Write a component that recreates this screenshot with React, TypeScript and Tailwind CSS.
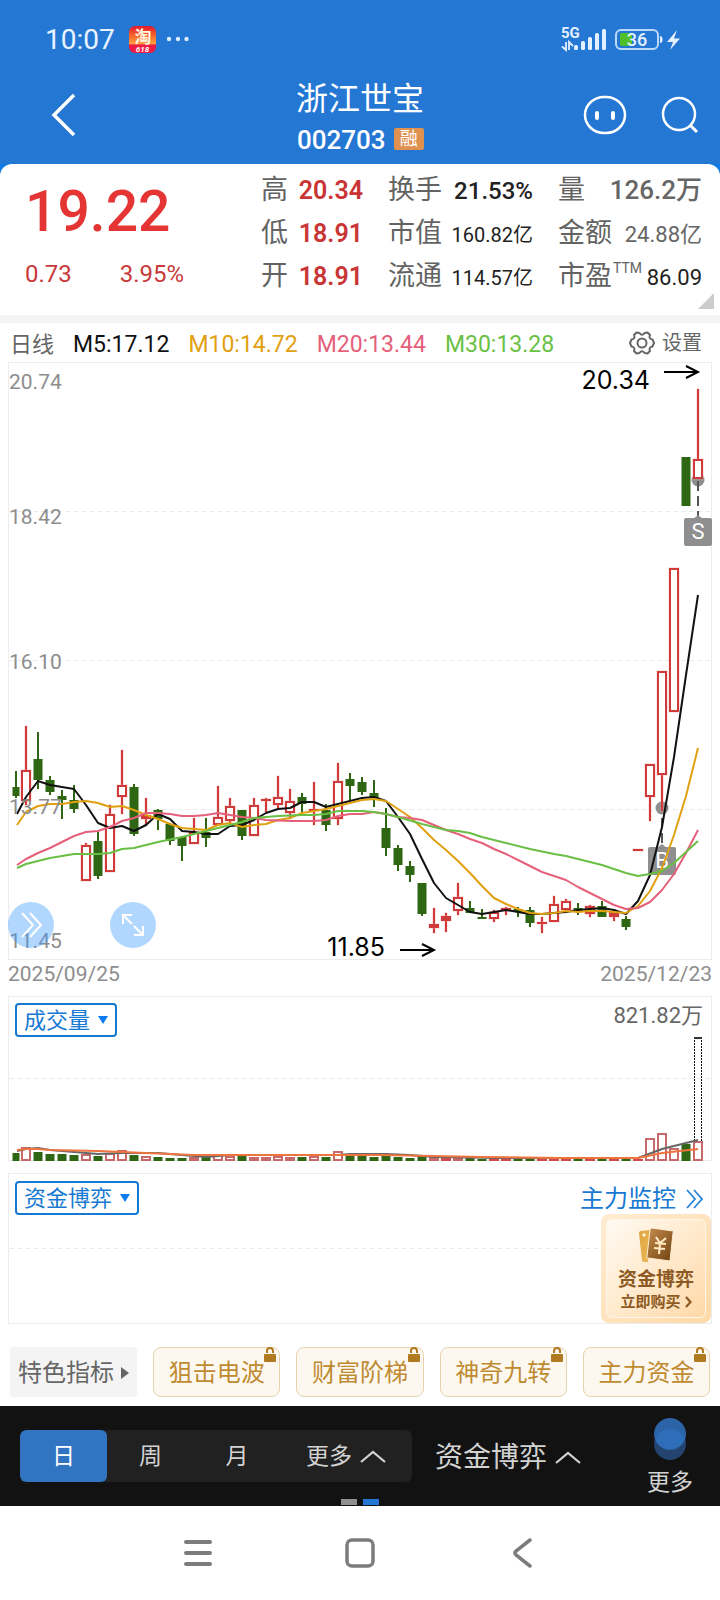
import React from "react";

type Candle = { up: boolean; high: number; top: number; bottom: number; low: number };

const c = (up: number, high: number, top: number, bottom: number, low: number): Candle => ({
  up: up === 1, high, top, bottom, low,
});

const candles: Candle[] = [
  c(0, 771, 787, 796, 798), c(1, 726, 770, 801, 805), c(0, 732, 759, 780, 789), c(0, 776, 780, 792, 795),
  c(0, 790, 796, 800, 819), c(0, 785, 800, 809, 813), c(1, 843, 845, 881, 881), c(0, 832, 841, 876, 879),
  c(1, 805, 814, 872, 872), c(1, 750, 785, 797, 814), c(0, 784, 787, 834, 836), c(1, 798, 815, 819, 826),
  c(0, 809, 810, 819, 830), c(0, 823, 824, 841, 845), c(0, 836, 837, 846, 861), c(1, 818, 832, 844, 844),
  c(0, 818, 832, 838, 847), c(1, 786, 817, 825, 825), c(1, 798, 806, 821, 823), c(0, 810, 810, 836, 840),
  c(1, 798, 805, 836, 836), c(1, 798, 799, 801, 812), c(1, 776, 797, 805, 808), c(1, 789, 801, 813, 819),
  c(0, 793, 797, 804, 812), c(1, 782, 809, 811, 825), c(0, 804, 810, 825, 831), c(1, 763, 781, 819, 825),
  c(0, 773, 779, 786, 800), c(0, 777, 782, 792, 795), c(0, 780, 793, 798, 807), c(0, 808, 828, 848, 856),
  c(0, 845, 848, 865, 871), c(0, 861, 866, 875, 882), c(0, 883, 883, 914, 916), c(1, 908, 924, 928, 933),
  c(1, 913, 916, 921, 932), c(1, 883, 897, 911, 915), c(0, 901, 908, 913, 913), c(0, 909, 917, 919, 919),
  c(1, 910, 912, 919, 922), c(1, 907, 908, 911, 915), c(0, 907, 909, 912, 917), c(0, 907, 910, 923, 927),
  c(1, 917, 922, 924, 933), c(1, 896, 904, 922, 922), c(1, 899, 901, 910, 913), c(0, 903, 908, 911, 915),
  c(1, 905, 906, 914, 917), c(0, 901, 906, 917, 917), c(1, 910, 912, 917, 921), c(0, 916, 919, 927, 930),
  c(1, 849, 849, 851, 851), c(1, 764, 764, 797, 821), c(1, 671, 671, 775, 811), c(1, 568, 568, 712, 712),
  c(0, 457, 457, 506, 506), c(1, 389, 459, 479, 479),
];

const volumeTops = [
  1153, 1147, 1152, 1154, 1154, 1155, 1154, 1156, 1153, 1150, 1155, 1156, 1157, 1158, 1158, 1157, 1157, 1154, 1156,
  1156, 1157, 1157, 1156, 1157, 1157, 1156, 1157, 1151, 1156, 1156, 1157, 1156, 1157, 1158, 1156, 1157, 1158, 1157,
  1158, 1159, 1158, 1158, 1158, 1158, 1159, 1158, 1158, 1159, 1159, 1159, 1159, 1159, 1159, 1138, 1133, 1148, 1144,
  1141,
];

const ma5 =
  "17,814 26,797 38,781 50,785 62,787 74,789 86,805 98,823 110,828 122,826 134,831 146,825 158,814 170,819 182,831 194,832 206,834 218,834 230,826 242,825 254,820 266,813 278,809 290,808 302,802 314,802 326,807 338,804 350,801 362,798 374,797 386,801 398,817 410,834 422,859 434,883 446,898 458,905 470,912 482,914 494,912 506,910 518,912 530,914 542,914 554,913 566,912 578,910 590,909 602,908 614,910 626,914 638,901 650,875 662,827 674,757 686,675 698,595";
const ma10 =
  "17,825 26,812 38,806 50,804 62,804 74,802 86,801 98,803 110,807 122,806 134,810 146,815 158,819 170,824 182,828 194,829 206,830 218,825 230,823 242,827 254,825 266,824 278,820 290,818 302,813 314,811 326,809 338,806 350,803 362,800 374,799 386,801 398,809 410,817 422,828 434,840 446,850 458,861 470,873 482,886 494,898 506,904 518,909 530,913 542,914 554,913 566,911 578,912 590,911 602,911 614,912 626,913 638,906 650,891 662,868 674,835 686,796 698,748";
const ma20 =
  "17,865 26,859 38,853 50,848 62,842 74,836 86,832 98,831 110,827 122,821 134,818 146,813 158,813 170,814 182,816 194,816 206,815 218,813 230,815 242,817 254,818 266,820 290,821 314,821 326,820 338,816 350,814 362,814 374,812 386,814 398,817 410,818 422,820 434,825 446,830 458,834 470,839 482,843 494,849 506,854 518,860 530,866 542,872 554,876 566,880 578,887 590,893 602,899 614,905 626,909 638,908 650,902 662,890 674,874 686,853 698,830";
const ma30 =
  "17,868 26,864 38,861 50,858 62,856 74,854 86,854 98,854 110,853 122,849 134,848 158,842 182,837 206,831 230,825 242,822 254,818 278,816 302,815 314,815 326,814 338,811 362,811 374,812 386,814 398,817 422,824 446,830 458,831 470,833 482,837 506,843 530,849 554,854 566,856 602,865 626,873 638,876 650,874 662,871 674,863 686,852 698,841";

const RED = "#cf3a3a";
const GREEN = "#2f6613";

function slot(i: number) {
  const x = i === 0 ? 16 : 14 + i * 12;
  const half = i === 0 ? 4 : 5;
  return { x, half };
}

function Sticks() {
  return (
    <g>
      {candles.map((k, i) => {
        const { x, half } = slot(i);
        const color = k.up ? RED : GREEN;
        const solid = !k.up || k.bottom - k.top < 6;
        const halo = k.up ? { stroke: "#f3a0a0", strokeOpacity: 0.5, paintOrder: "stroke" } : {};
        return (
          <g key={i} fill={color}>
            {k.top > k.high && <rect x={x - 1} y={k.high} width={2} height={k.top - k.high} {...halo} />}
            {k.low > k.bottom && <rect x={x - 1} y={k.bottom} width={2} height={k.low - k.bottom} {...halo} />}
            {solid ? (
              <rect x={x - half + (k.up ? 0 : 0.5)} y={k.top} width={half * 2 - (k.up ? 0 : 1)} height={k.bottom - k.top} {...halo} />
            ) : (
              <>
                <rect x={x - half} y={k.top} width={half * 2} height={k.bottom - k.top} {...halo} />
                <rect x={x - half + 1} y={k.top + 1} width={half * 2 - 2} height={k.bottom - k.top - 2} fill="#fff" stroke={color} strokeWidth={2} />
              </>
            )}
          </g>
        );
      })}
    </g>
  );
}

function Signal({ x, y, label }: { x: number; y: number; label: string }) {
  return (
    <g>
      <path d={`M${x - 5} ${y} L${x} ${y - 4} L${x + 5} ${y} Z`} fill="#8f8f8f" />
      <rect x={x - 14} y={y - 1} width={28} height={28} rx={2} fill="#8f8f8f" />
      <text x={x} y={y + 20} textAnchor="middle" fontSize={22} fill="#fff">{label}</text>
    </g>
  );
}

function PriceChart() {
  const labels: [string, number][] = [["20.74", 389], ["18.42", 524], ["16.10", 669], ["13.77", 814], ["11.45", 948]];
  return (
    <svg viewBox="8 362 704 598" className="block h-auto w-full" role="img" aria-label="日线">
      <rect x={8.5} y={362.5} width={703} height={597} fill="none" stroke="#ececec" />
      <g stroke="#ececec" strokeDasharray="5 3">
        <path d="M9 511.5H711M9 660.5H711M9 809.5H711" />
      </g>
      <circle cx={662} cy={808} r={6.5} fill="#8f8f8f" />
      <circle cx={698} cy={480} r={6.5} fill="#8f8f8f" />
      <Sticks />
      <path d="M662 818V846M698 481V517" stroke="#555" strokeWidth={2} strokeDasharray="10 5" />
      <Signal x={662} y={848} label="B" />
      <Signal x={698} y={519} label="S" />
      <g fill="none" strokeWidth={2} strokeLinejoin="round">
        <polyline points={ma5} stroke="#111" />
        <polyline points={ma10} stroke="#e0a010" />
        <polyline points={ma20} stroke="#e5607a" />
        <polyline points={ma30} stroke="#6abf45" />
      </g>
      <g fontSize={21} fill="#8d8d8d">
        {labels.map(([t, y]) => (
          <text key={t} x={9} y={y}>{t}</text>
        ))}
      </g>
      <g fontSize={25} fill="#000" fontFamily="Inter, sans-serif">
        <text x={650} y={389} textAnchor="end">20.34</text>
        <text x={385} y={956} textAnchor="end">11.85</text>
      </g>
      <path d="M664 372H697M686 366L698 372L686 378M400 950H433M422 944L434 950L422 956" fill="none" stroke="#000" strokeWidth={2} />
    </svg>
  );
}

function VolumeChart() {
  return (
    <svg viewBox="8 996 704 165" className="block h-auto w-full" role="img" aria-label="成交量">
      <rect x={8.5} y={996.5} width={703} height={164} fill="none" stroke="#ececec" />
      <path d="M9 1078.5H711" stroke="#ececec" strokeDasharray="5 3" />
      {volumeTops.map((y, i) => {
        const { x, half } = slot(i);
        const h = 1161 - y;
        if (!candles[i].up) return <rect key={i} x={x - half + 0.5} y={y} width={half * 2 - 1} height={h} fill={GREEN} />;
        if (h < 4) return <rect key={i} x={x - half} y={y} width={half * 2} height={h} fill="#cf4a4a" />;
        return <rect key={i} x={x - half + 1} y={y + 1} width={half * 2 - 2} height={h - 2} fill="#fff" stroke="#c96a6a" strokeWidth={2} />;
      })}
      <path d="M694.5 1141V1037M701.5 1037V1141" stroke="#111" strokeDasharray="2 1" fill="none" />
      <path d="M694 1038H702" stroke="#333" strokeWidth={2} />
      <g fill="none" strokeWidth={2}>
        <polyline stroke="#666" points="17,1151 26,1149 38,1148 50,1150 74,1152 98,1154 122,1153 158,1153 182,1155 206,1157 230,1155 338,1155 350,1154 386,1154 410,1155 434,1157 500,1158 638,1158 662,1149 698,1140" />
        <polyline stroke="#ee7440" points="17,1150 26,1149 38,1149 50,1150 98,1151 170,1154 194,1155 380,1155 434,1156 482,1157 560,1158 638,1158 662,1153 698,1149" />
      </g>
    </svg>
  );
}

function PanelPicker({ children }: { children: React.ReactNode }) {
  return (
    <button className="flex h-[34px] items-center gap-2 rounded border-2 border-[#1779d2] bg-white px-[7px] text-[22px] text-[#1779d2]">
      <span className="pt-px">{children}</span>
      <svg width="10" height="8" viewBox="0 0 10 8"><path d="M0 0H10L5 8Z" fill="#0b7cf0" /></svg>
    </button>
  );
}

function Stat({ label, value, className, sup }: { label: string; value: string; className: string; sup?: string }) {
  return (
    <div className="flex h-[43px] items-center justify-between">
      <dt className="flex text-[27px] text-[#636363]">
        {label}
        {sup && <sup className="top-0 mt-[5px] pl-px text-[14px] leading-none">{sup}</sup>}
      </dt>
      <dd className={className}>{value}</dd>
    </div>
  );
}

function Header() {
  return (
    <header className="bg-[#2577d4] text-white">
      <div className="flex h-[78px] items-center pl-[45px] pr-10">
        <span className="pt-px text-[28px] text-[#e8f3ff]">10:07</span>
        <svg className="ml-[14px]" width="27" height="27" viewBox="0 0 27 27">
          <defs>
            <linearGradient id="app" x2="0" y2="1">
              <stop offset="0" stopColor="#e3172f" />
              <stop offset=".35" stopColor="#f5652a" />
              <stop offset=".66" stopColor="#ffa040" />
              <stop offset=".7" stopColor="#ec1c43" />
            </linearGradient>
          </defs>
          <rect width="27" height="27" rx="6" fill="url(#app)" />
          <text x="14" y="17" fontSize="17" fontWeight="700" textAnchor="middle" fill="#fff6e0">淘</text>
          <text x="13.500" y="26" fontSize="8" fontWeight="700" fontStyle="italic" textAnchor="middle" fill="#fff">618</text>
        </svg>
        <svg className="ml-[10px]" width="24" height="6" viewBox="0 0 24 6" fill="#dcecff">
          <circle cx="3" cy="3" r="2.200" /><circle cx="12" cy="3" r="2.200" /><circle cx="20.500" cy="3" r="2.200" />
        </svg>
        <svg className="ml-auto" width="124" height="40" viewBox="556 18 124 40" fill="#e3f0ff">
          <text x="561" y="37" fontSize="15" fontWeight="700">5G</text>
          <path d="M566 41V49L562 45.500M569 49V41L573 45" fill="none" stroke="#e3f0ff" strokeWidth="1.800" />
          <rect x="574" y="44" width="4" height="5" rx="1.500" /><rect x="581" y="40" width="4" height="9" rx="1.500" />
          <rect x="588" y="36" width="4" height="13" rx="1.500" /><rect x="595" y="32" width="4" height="17" rx="1.500" />
          <rect x="602" y="28" width="4" height="21" rx="1.500" />
          <rect x="616" y="29" width="42" height="19" rx="5" fill="none" stroke="#bcd9fa" strokeWidth="2" />
          <path d="M622 32H632V45H622Q620 45 620 43V34Q620 32 622 32Z" fill="#4fc02a" />
          <path d="M660 35Q662.500 35 662.500 38.500T660 42Z" />
          <text x="637" y="45" fontSize="18" fontWeight="500" textAnchor="middle">36</text>
          <path d="M677 29L667 41H673L670 49L680 37.500H674Z" />
        </svg>
      </div>
      <div className="grid h-[86px] grid-cols-[1fr_auto_1fr] items-center">
        <button aria-label="返回" className="mb-3 ml-[50px] justify-self-start">
          <svg width="26" height="44" viewBox="0 0 26 44"><path d="M24 2L4 22L24 42" fill="none" stroke="#fff" strokeWidth="3.500" /></svg>
        </button>
        <div className="pb-1">
          <h1 className="text-[32px] leading-[40px] font-normal">浙江世宝</h1>
          <div className="flex items-center gap-2 pl-px">
            <span className="pt-px text-[26px] leading-[40px] font-medium">002703</span>
            <span className="rounded-[2px] bg-[#e0904f] px-[6px] text-[18px] leading-[22px]">融</span>
          </div>
        </div>
        <div className="mb-3 flex items-center gap-[34px] justify-self-end pr-[21px]">
          <button aria-label="助手">
            <svg width="44" height="40" viewBox="0 0 44 40" fill="none" stroke="#fff" strokeWidth="2.500">
              <rect x="2" y="2" width="40" height="36" rx="19" ry="18" />
              <path d="M14 18V23M30 18V23" strokeWidth="4" strokeLinecap="round" />
            </svg>
          </button>
          <button aria-label="搜索">
            <svg width="38" height="38" viewBox="0 0 38 38" fill="none" stroke="#fff" strokeWidth="2.500">
              <circle cx="18" cy="18" r="16" /><path d="M29 29L36 36" strokeWidth="3" />
            </svg>
          </button>
        </div>
      </div>
    </header>
  );
}

function Quote() {
  return (
    <section className="bg-[#0f7ce6]">
      <div className="relative flex h-[151px] rounded-t-xl bg-white">
        <div className="w-[261px] shrink-0 pl-[25px]">
          <p className="pt-3 text-[57px] leading-[72px] font-medium text-[#e53434]">19.22</p>
          <p className="flex gap-12 pt-[9px] text-[24px] leading-[34px] text-[#c83a3a]">
            <span>0.73</span><span>3.95%</span>
          </p>
        </div>
        <dl className="mr-[18px] grid flex-1 grid-cols-[102fr_145fr_144fr] content-start gap-x-[25px] pt-[5px]">
          <Stat label="高" value="20.34" className="text-[25px] font-semibold text-[#c93535]" />
          <Stat label="换手" value="21.53%" className="text-[24px] font-medium text-[#222]" />
          <Stat label="量" value="126.2万" className="text-[26px] font-medium text-[#666]" />
          <Stat label="低" value="18.91" className="text-[25px] font-semibold text-[#c93535]" />
          <Stat label="市值" value="160.82亿" className="pt-[2px] text-[20px] text-[#222]" />
          <Stat label="金额" value="24.88亿" className="pt-[2px] text-[22px] text-[#666]" />
          <Stat label="开" value="18.91" className="text-[25px] font-semibold text-[#c93535]" />
          <Stat label="流通" value="114.57亿" className="pt-[2px] text-[20px] text-[#222]" />
          <Stat label="市盈" sup="TTM" value="86.09" className="pt-[2px] text-[22px] text-[#222]" />
        </dl>
        <svg className="absolute right-[6px] bottom-[6px]" width="16" height="16" viewBox="0 0 16 16"><path d="M16 0V16H0Z" fill="#ccc" /></svg>
      </div>
      <div className="h-2 bg-[#f3f3f3]" />
    </section>
  );
}

function Legend() {
  return (
    <div className="flex h-[39px] items-center gap-[19px] pt-[5px] pr-[18px] pl-[10px] text-[23px]">
      <span className="pb-px text-[22px] text-[#666]">日线</span>
      <span className="text-[#111]">M5:17.12</span>
      <span className="text-[#e0a010]">M10:14.72</span>
      <span className="text-[#e5607a]">M20:13.44</span>
      <span className="text-[#6abf45]">M30:13.28</span>
      <button className="ml-auto flex items-center gap-[7px] pb-[4px] text-[20px] text-[#666]">
        <svg width="26" height="24" viewBox="0 0 26 24" fill="none" stroke="#666" strokeWidth="2" strokeLinejoin="round">
          <path d="M7.500 1.500L10.500 2Q13 5.500 15.500 2L18.500 1.500L21 4Q19.500 8 23.500 8.500L25 12L23.500 15.500Q19.500 16 21 20L18.500 22.500L15.500 22Q13 18.500 10.500 22L7.500 22.500L5 20Q6.500 16 2.500 15.500L1 12L2.500 8.500Q6.500 8 5 4Z" />
          <circle cx="13" cy="12" r="4.500" />
        </svg>
        设置
      </button>
    </div>
  );
}

function PromoCard() {
  return (
    <button className="absolute right-0 bottom-0 h-[109px] w-[110px] rounded-lg bg-linear-to-br from-[#ffedd2] to-[#ffd9a8] p-[5px] font-bold text-[#8c5a22]">
      <span className="flex h-full flex-col items-center rounded-md border border-[#fff6e8] bg-linear-to-br from-[#fffaf2] to-[#ffd9a8] pt-2">
        <svg width="36" height="36" viewBox="0 0 36 36">
          <defs>
            <linearGradient id="gold" x2="1" y2="1"><stop stopColor="#e0a33a" /><stop offset="1" stopColor="#eab95c" /></linearGradient>
            <linearGradient id="brown" x2="1" y2="1"><stop stopColor="#c68f4e" /><stop offset="1" stopColor="#6f400f" /></linearGradient>
          </defs>
          <path d="M1 5Q1 3 3 3L12 2L10 34L6 34Q4 34 4 32Z" fill="url(#gold)" />
          <circle cx="6" cy="7" r="1.700" fill="#fff3d8" />
          <path d="M14 0L35 3Q36 3 35 5L32 33L10 30Q8 30 9 28L12 2Q12 0 14 0Z" fill="url(#brown)" stroke="#ffefd6" />
          <path d="M18 9L22 15L28 10M17 15L28 16M16 20L27 21M22 15L21 26" fill="none" stroke="#ffe9c2" strokeWidth="2.200" />
        </svg>
        <span className="pt-[3px] text-[19px] leading-[25px]">资金博弈</span>
        <span className="flex items-center gap-1 text-[15px] leading-[20px]">
          立即购买
          <svg width="7" height="12" viewBox="0 0 7 12"><path d="M1 1L5.500 6L1 11" fill="none" stroke="#8c5a22" strokeWidth="2.200" /></svg>
        </span>
      </span>
    </button>
  );
}

function Up() {
  return (
    <svg width="26" height="14" viewBox="0 0 26 14"><path d="M1 12L13 2L25 12" fill="none" stroke="#d2d2d2" strokeWidth="2.200" /></svg>
  );
}

export default function App() {
  return (
    <div className="min-h-screen bg-white font-[Roboto,'Noto_Sans_CJK_SC',sans-serif] whitespace-nowrap">
      <Header />
      <main>
        <Quote />
        <Legend />
        <section className="relative mx-2">
          <PriceChart />
          <button aria-label="展开" className="absolute bottom-3 left-0 flex size-[46px] items-center justify-center rounded-full bg-[#3b9bff]/40">
            <svg width="24" height="28" viewBox="0 0 24 28" fill="none" stroke="#fff" strokeWidth="2"><path d="M3 2L14 14L3 26M11 2L22 14L11 26" /></svg>
          </button>
          <button aria-label="全屏" className="absolute bottom-3 left-[102px] flex size-[46px] items-center justify-center rounded-full bg-[#3b9bff]/40">
            <svg width="24" height="24" viewBox="0 0 24 24" fill="none" stroke="#fff" strokeWidth="2"><path d="M2 11V2H11M2 2L11 11M22 13V22H13M22 22L13 13" /></svg>
          </button>
        </section>
        <div className="flex h-9 justify-between px-2 pt-[2px] text-[21px] leading-[25px] text-[#8d8d8d]">
          <time>2025/09/25</time>
          <time>2025/12/23</time>
        </div>
        <section className="relative mx-2">
          <VolumeChart />
          <div className="absolute inset-x-0 top-[7px] flex justify-between pr-[9px] pl-[7px]">
            <PanelPicker>成交量</PanelPicker>
            <span className="text-[22px] leading-[26px] text-[#666]">821.82万</span>
          </div>
        </section>
        <section className="relative mx-2 mt-3 h-[151px] border border-[#ececec]">
          <svg className="absolute inset-x-0 top-[74px] w-full" height="1"><line x2="100%" y1=".5" y2=".5" stroke="#ececec" strokeDasharray="5 3" /></svg>
          <div className="flex items-center justify-between pt-[6px] pr-[7px] pl-[6px]">
            <PanelPicker>资金博弈</PanelPicker>
            <a href="#monitor" className="flex items-center gap-[10px] pt-[2px] text-[24px] leading-[34px] text-[#1779d2]">
              主力监控
              <svg width="18" height="20" viewBox="0 0 18 20" fill="none" stroke="#2b84dc" strokeWidth="1.800"><path d="M1 1L9 10L1 19M8 1L16 10L8 19" /></svg>
            </a>
          </div>
          <PromoCard />
        </section>
        <nav aria-label="特色指标" className="mt-[23px] grid h-[50px] grid-cols-5 gap-4 px-[10px] text-[24px]">
          <button className="flex items-center justify-center gap-[7px] rounded bg-[#f4f4f4] pt-px text-[#666]">
            特色指标
            <svg width="8" height="12" viewBox="0 0 8 12"><path d="M0 0L8 6L0 12Z" fill="#666" /></svg>
          </button>
          {["狙击电波", "财富阶梯", "神奇九转", "主力资金"].map((t) => (
            <button key={t} className="relative rounded-lg border border-[#e6d3ae] bg-[#fcf8f0] pt-px text-[#bf8b30]">
              {t}
              <svg className="absolute -top-px right-[3px]" width="12" height="15" viewBox="0 0 12 15">
                <path d="M3 6V4Q3 1 6 1T9 4V6" fill="none" stroke="#b07a20" strokeWidth="2" />
                <rect y="7" width="12" height="8" rx="1" fill="#b07a20" />
              </svg>
            </button>
          ))}
        </nav>
      </main>
      <footer className="mt-[9px]">
        <div className="relative flex h-[100px] items-center bg-[#121212] pl-5 text-[#d2d2d2]">
          <div className="flex h-[52px] w-[392px] overflow-hidden rounded-md bg-[#212121] text-[23px]">
            <button className="w-[87px] rounded-md bg-[#3174c2] pt-[2px] text-white">日</button>
            <button className="w-[87px] pt-[2px]">周</button>
            <button className="w-[86px] pt-[2px]">月</button>
            <button className="flex flex-1 items-center justify-center gap-2 pt-[2px]">更多<Up /></button>
          </div>
          <button className="ml-[23px] flex items-center gap-2 pt-[3px] text-[28px]">资金博弈<Up /></button>
          <button className="mr-[27px] ml-auto flex flex-col items-center self-stretch pt-3 text-[23px] leading-[34px]">
            <svg width="32" height="42" viewBox="0 0 32 42">
              <circle cx="16" cy="26" r="16" fill="#23446f" />
              <circle cx="16" cy="16" r="16" fill="#2c62a6" />
              <path d="M1 21A16 16 0 0 1 31 21A16 16 0 0 1 1 21Z" fill="#2e6db8" />
            </svg>
            <span className="pt-[6px]">更多</span>
          </button>
          <div className="absolute inset-x-0 bottom-px flex justify-center gap-[6px]">
            <span className="h-[6px] w-4 bg-[#8f8f8f]" />
            <span className="h-[6px] w-4 bg-[#2577d4]" />
          </div>
        </div>
        <nav aria-label="系统导航" className="flex h-[94px] items-center justify-center gap-[132px]">
          <button aria-label="最近任务">
            <svg width="30" height="30" viewBox="0 0 30 30" stroke="#7c7c7c" strokeWidth="4" strokeLinecap="round"><path d="M3 4H27M3 15H27M3 26H27" /></svg>
          </button>
          <button aria-label="主屏幕">
            <svg width="30" height="30" viewBox="0 0 30 30"><rect x="2" y="2" width="26" height="26" rx="5" fill="none" stroke="#7c7c7c" strokeWidth="3.500" /></svg>
          </button>
          <button aria-label="后退">
            <svg width="30" height="30" viewBox="0 0 30 30"><path d="M23 2L9 13Q7 15 9 17L23 28" fill="none" stroke="#7c7c7c" strokeWidth="3.500" strokeLinecap="round" /></svg>
          </button>
        </nav>
      </footer>
    </div>
  );
}
